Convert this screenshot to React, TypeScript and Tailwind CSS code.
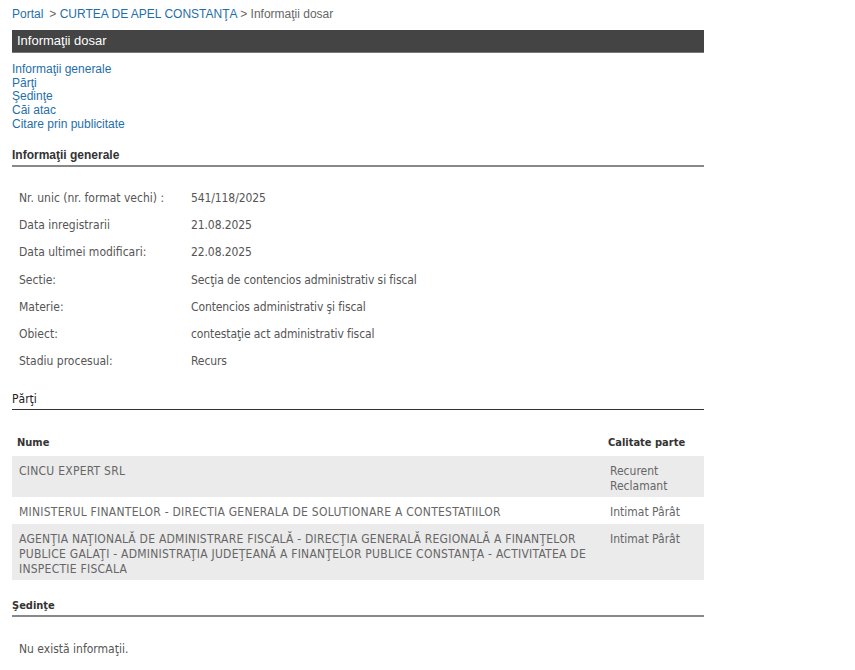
import React from 'react'

const arial = "font-['Liberation_Sans',Arial,sans-serif]"
const cond = "font-['DejaVu_Sans_Condensed','DejaVu_Sans',sans-serif]"

const info: [string, string][] = [
  ['Nr. unic (nr. format vechi) :', '541/118/2025'],
  ['Data inregistrarii', '21.08.2025'],
  ['Data ultimei modificari:', '22.08.2025'],
  ['Sectie:', 'Secţia de contencios administrativ si fiscal'],
  ['Materie:', 'Contencios administrativ şi fiscal'],
  ['Obiect:', 'contestaţie act administrativ fiscal'],
  ['Stadiu procesual:', 'Recurs'],
]

const parti = [
  { nume: 'CINCU EXPERT SRL', calitate: ['Recurent', 'Reclamant'] },
  { nume: 'MINISTERUL FINANTELOR - DIRECTIA GENERALA DE SOLUTIONARE A CONTESTATIILOR', calitate: ['Intimat Pârât'] },
  {
    nume: 'AGENŢIA NAŢIONALĂ DE ADMINISTRARE FISCALĂ - DIRECŢIA GENERALĂ REGIONALĂ A FINANŢELOR PUBLICE GALAŢI - ADMINISTRAŢIA JUDEŢEANĂ A FINANŢELOR PUBLICE CONSTANŢA - ACTIVITATEA DE INSPECTIE FISCALA',
    calitate: ['Intimat Pârât'],
  },
]

export default function App() {
  return (
    <div className="min-h-screen bg-white">
      <div className="w-[692px] ml-3">
        {/* Breadcrumb */}
        <div className={`${arial} text-[12px] leading-[15px] pt-[7px] text-[#666]`}>
          <a href="#" className="text-[#1f6fa8]">Portal</a>
          <span className="ml-[6px]">&gt; </span>
          <a href="#" className="text-[#1f6fa8]">CURTEA DE APEL CONSTANŢA</a>
          <span> &gt; Informaţii dosar</span>
        </div>

        {/* Title bar */}
        <div className={`${arial} mt-[8px] h-[23px] bg-[#444] border-b border-[#777] text-white text-[13px] leading-[22px] pl-[5px]`}>
          Informaţii dosar
        </div>

        {/* Anchor links */}
        <div className={`${arial} mt-[10px] flex flex-col text-[12px] leading-[13.7px] text-[#1f6fa8]`}>
          <a href="#">Informaţii generale</a>
          <a href="#">Părţi</a>
          <a href="#">Şedinţe</a>
          <a href="#">Căi atac</a>
          <a href="#">Citare prin publicitate</a>
        </div>

        {/* Informatii generale */}
        <div className={`${arial} mt-[16px] font-bold text-[12px] leading-[14px] text-[#333] pb-[3px] border-b-2 border-[#888]`}>
          Informaţii generale
        </div>
        <div className={`${cond} mt-[24px] text-[12px] leading-[15px] text-[#555]`}>
          {info.map(([k, v]) => (
            <div key={k} className="flex h-[27.33px] items-start pl-[7px]">
              <span className="w-[172px] shrink-0">{k}</span>
              <span className="tracking-[-0.1px]">{v}</span>
            </div>
          ))}
        </div>

        {/* Parti */}
        <div className={`${cond} mt-[10px] text-[12px] leading-[14px] text-[#222] pb-[3px] border-b border-[#333]`}>
          Părţi
        </div>
        <div className={`${cond} mt-[26px] flex font-bold text-[11px] leading-[14px] text-[#333] px-[5px] pb-[6px]`}>
          <span className="flex-1">Nume</span>
          <span className="w-[91px]">Calitate parte</span>
        </div>
        <div className={`${cond} text-[12px] leading-[15px] text-[#666]`}>
          {parti.map((p, i) => (
            <div
              key={i}
              className={`flex px-[7px] pt-[8px] pb-[3.5px] ${i % 2 === 0 ? 'bg-[#ebebeb]' : 'bg-white'}`}
            >
              <span className="flex-1 pr-[20px] tracking-[0.25px]">{p.nume}</span>
              <span className="w-[87px] flex flex-col">
                {p.calitate.map(c => (
                  <span key={c}>{c}</span>
                ))}
              </span>
            </div>
          ))}
        </div>

        {/* Sedinte */}
        <div className={`${cond} mt-[19px] font-bold text-[11px] leading-[14px] text-[#333] pb-[2px] border-b-2 border-[#888]`}>
          Şedinţe
        </div>
        <div className={`${cond} mt-[23px] pl-[7px] text-[12px] text-[#555]`}>
          Nu există informaţii.
        </div>
      </div>
    </div>
  )
}
